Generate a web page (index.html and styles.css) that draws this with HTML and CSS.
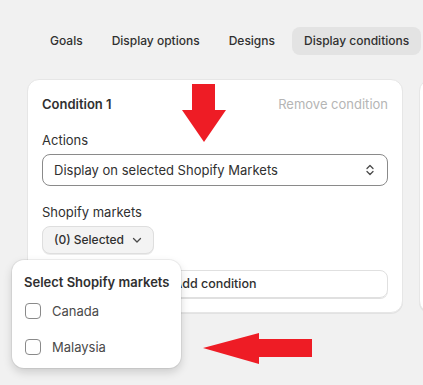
FILE: index.html
```html
<!DOCTYPE html>
<html>
<head>
<meta charset="utf-8">
<link rel="stylesheet" href="styles.css">
</head>
<body>
<nav class="tabs">
  <span class="tab">Goals</span>
  <span class="tab">Display options</span>
  <span class="tab">Designs</span>
  <span class="tab active">Display conditions</span>
</nav>
<main class="main">
  <section class="card">
    <div class="card-head">
      <span class="card-title">Condition 1</span>
      <span class="remove">Remove condition</span>
    </div>
    <div class="field">
      <div class="label">Actions</div>
      <div class="select">
        <span>Display on selected Shopify Markets</span>
        <svg class="select-icon" width="10" height="14" viewBox="0 0 10 14"><polyline points="2,5.5 5,2.5 8,5.5"/><polyline points="2,8.5 5,11.5 8,8.5"/></svg>
      </div>
    </div>
    <div class="field">
      <div class="label">Shopify markets</div>
      <div class="btn-row"><span class="pick-btn">(0) Selected
        <svg class="chev" width="10" height="10" viewBox="0 0 10 10"><polyline points="1.5,3.5 5,7 8.5,3.5"/></svg></span></div>
    </div>
    <div class="add-btn">Add condition</div>
  </section>
  <section class="card side"></section>
</main>

<div class="popover">
  <div class="pop-title">Select Shopify markets</div>
  <label class="opt"><span class="box"></span>Canada</label>
  <label class="opt"><span class="box"></span>Malaysia</label>
</div>

<svg class="arrow-down" width="48" height="62" viewBox="0 0 48 62"><polygon points="12,2 35,2 35,28 46,28 24,60 2,28 12,28"/></svg>
<svg class="arrow-left" width="115" height="37" viewBox="0 0 115 37"><polygon points="3,18 59,3 59,9 112,9 112,27 59,27 59,34"/></svg>
</body>
</html>
```

FILE: styles.css
```css
* { box-sizing: border-box; }
html, body { margin: 0; padding: 0; }
body {
  background: #f1f1f1;
  font-family: Inter, "Noto Sans", sans-serif;
  font-size: 13px;
  line-height: 20px;
  color: #303030;
  width: 423px;
  height: 385px;
  overflow: hidden;
  position: relative;
}
.tabs {
  display: flex;
  gap: 5px;
  padding: 27px 0 0 38px;
  white-space: nowrap;
}
.tab {
  height: 28px;
  line-height: 28px;
  padding: 0 12px;
  border-radius: 8px;
  font-size: 12px;
  font-weight: 500;
  color: #303030;
}
.tab.active { background: #e3e3e3; }
.main {
  display: flex;
  gap: 16px;
  padding: 24px 0 0 27px;
}
.card {
  width: 376px;
  flex-shrink: 0;
  background: #fff;
  border: 1px solid #e6e6e6;
  border-radius: 12px;
  padding: 14px;
  box-shadow: 0 1px 0 rgba(0,0,0,0.06);
}
.card.side { width: 300px; height: 234px; }
.card-head {
  display: flex;
  justify-content: space-between;
}
.card-title { font-weight: 600; }
.remove { color: #b5b5b5; }
.field { margin-top: 16px; }
.label { margin-bottom: 4px; }
.select {
  height: 32px;
  border: 1px solid #8a8a8a;
  border-radius: 8px;
  display: flex;
  align-items: center;
  justify-content: space-between;
  padding: 0 12px 0 11px;
}
.select-icon polyline, .chev polyline {
  fill: none;
  stroke: #4a4a4a;
  stroke-width: 1.3;
  stroke-linecap: round;
  stroke-linejoin: round;
}
.btn-row { display: flex; }
.pick-btn {
  height: 28px;
  display: flex;
  align-items: center;
  gap: 8px;
  padding: 0 11px 0 11px;
  background: #f3f3f3;
  border: 1px solid #dedede;
  border-radius: 8px;
  box-shadow: 0 1px 0 rgba(0,0,0,0.08);
  font-size: 12px;
  font-weight: 500;
}
.add-btn {
  margin-top: 16px;
  height: 28px;
  line-height: 26px;
  text-align: center;
  border: 1px solid #e0e0e0;
  border-radius: 8px;
  box-shadow: 0 1px 0 rgba(0,0,0,0.12);
  font-size: 12.5px;
  font-weight: 500;
}
.popover {
  position: absolute;
  left: 12px;
  top: 260px;
  width: 169px;
  height: 108px;
  background: #fff;
  border-radius: 12px;
  padding: 12px 12px 3px;
  box-shadow: 0 0 0 1px rgba(0,0,0,0.06), 0 4px 10px rgba(0,0,0,0.16);
}
.pop-title { font-weight: 600; margin-bottom: 1px; white-space: nowrap; }
.opt {
  height: 36px;
  display: flex;
  align-items: center;
  gap: 11px;
  padding-left: 1px;
  color: #4a4a4a;
}
.box {
  width: 16px;
  height: 16px;
  border: 1px solid #8a8a8a;
  border-radius: 4px;
  background: #fff;
}
.arrow-down, .arrow-left { position: absolute; fill: #ee1c25; }
.arrow-down { left: 180px; top: 82px; }
.arrow-left { left: 200px; top: 330px; }
```
